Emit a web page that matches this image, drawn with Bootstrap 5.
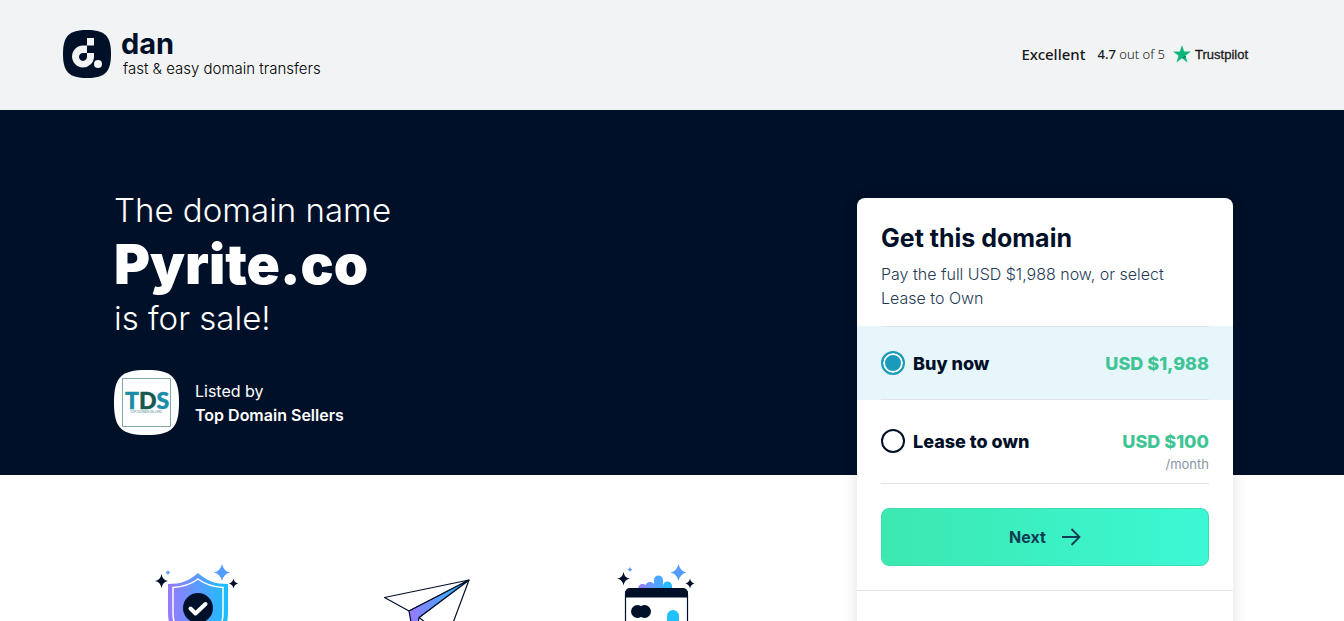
<!DOCTYPE html>
<html lang="en">
<head>
<meta charset="utf-8">
<meta name="viewport" content="width=device-width, initial-scale=1">
<title>Pyrite.co is for sale</title>
<link href="https://cdn.jsdelivr.net/npm/bootstrap@5.3.0/dist/css/bootstrap.min.css" rel="stylesheet">
<style>
  :root { --navy: #001029; --slate: #1f3b57; --mint: #3fc495; --teal: #1a9bbb; --rule: #dfe4e8; }
  body { font-family: Inter, "Liberation Sans", sans-serif; color: var(--navy); height: 100vh; overflow: hidden; }
  .site-header { background: #f1f3f5; padding: 30px 96px 30px 63px; }
  .brand { color: var(--navy); gap: 10px; }
  .brand-name { font-size: 29px; line-height: 28px; font-weight: 700; }
  .brand-tag { font-size: 15px; line-height: 22px; font-weight: 300; padding-left: 2px; color: #000; }
  .rating { font-family: "Noto Sans", sans-serif; font-size: 15px; line-height: 24px; color: #191919; padding-bottom: 2px; }
  .rating-score { font-size: 13px; }
  .rating-logo { font-family: "Liberation Sans", sans-serif; font-size: 13px; -webkit-text-stroke: .3px #191919; padding-top: 2px; }
  .page-width { max-width: 1144px; padding-left: 14px; padding-right: 11px; }
  .hero { background: var(--navy); padding: 80px 0 40px; }
  .hero-line { font-size: 33px; line-height: 40px; font-weight: 300; }
  .hero-title { font-size: 55px; line-height: 68px; font-weight: 900; }
  .seller { margin-top: 32px; gap: 16px; font-size: 16px; line-height: 24px; }
  .offer { width: 376px; min-height: 640px; margin-top: 8px; margin-bottom: -600px; z-index: 1; border: 0; border-radius: 8px; box-shadow: 0 2px 16px rgba(0, 15, 41, .12); }
  .offer-head { padding: 24px 24px 16px; }
  .offer-head h2 { font-size: 25px; line-height: 32px; font-weight: 700; }
  .offer-head p { font-size: 16px; line-height: 24px; font-weight: 300; color: var(--slate); }
  .choice { padding: 0 24px; cursor: pointer; }
  .choice-row { border-bottom: 1px solid var(--rule); font-size: 18px; line-height: 26px; font-weight: 800; padding: 24px 0 22px; gap: 8px; }
  .choice.is-first .choice-row { border-top: 1px solid var(--rule); }
  .choice:has(input:checked) { background: #e7f6fb; }
  .choice.is-second .choice-row { padding: 29px 0 10px; }
  .choice-price { color: var(--mint); }
  .choice-term { font-size: 13px; line-height: 18px; font-weight: 400; color: #8795a5; }
  .choice-radio { appearance: none; width: 24px; height: 24px; margin: 0; border: 2px solid var(--navy); border-radius: 50%; background: #fff; }
  .choice-radio:checked { border-color: var(--teal); background: var(--teal); box-shadow: inset 0 0 0 2px #fff; }
  .offer-action { padding: 24px; border-bottom: 1px solid var(--rule); }
  .btn-next { height: 58px; border: 1px solid #3fdcb2; border-radius: 8px; background: linear-gradient(90deg, #3be8b0, #3cf8d4); color: #123a56; font-size: 16px; font-weight: 700; gap: 15px; }
  .btn-next:hover { background: #3be8b0; color: #123a56; }
  .features { max-width: 626px; gap: 64px; padding-top: 88px; }
</style>
</head>
<body>
<header class="site-header d-flex justify-content-between align-items-center">
  <a href="#" class="brand d-flex text-decoration-none">
    <svg width="48" height="48" viewBox="0 0 48 48" aria-hidden="true">
      <path fill="#001029" d="M24 0C42 0 48 6 48 24S42 48 24 48 0 42 0 24 6 0 24 0Z"/>
      <path fill="#f1f3f5" fill-rule="evenodd" d="M24 8h7v7.500H24ZM20 15.500H24V23H20.500a4 4 0 1 0 3.500 4V23h7v4a11 11 0 1 1-11-11.500Z"/>
      <circle cx="35" cy="34" r="4" fill="#f1f3f5"/>
    </svg>
    <span class="d-flex flex-column">
      <span class="brand-name">dan</span>
      <span class="brand-tag">fast &amp; easy domain transfers</span>
    </span>
  </a>
  <div class="rating d-flex align-items-center">
    <span class="me-2 pe-1 fw-medium">Excellent</span>
    <span class="rating-score me-2"><span class="fw-medium">4.7</span> <span class="fw-light">out of 5</span></span>
    <svg width="18" height="18" viewBox="0 0 18 18" class="me-1" aria-hidden="true">
      <path fill="#0cb67a" d="M9 0l2.100 6.600H18l-5.600 4.100 2.200 6.700L9 13.300l-5.600 4.100 2.200-6.700L0 6.600h6.900Z"/>
      <path fill="#056b4a" d="M12.900 12.200l-.5-1.500L9 13.300Z"/>
    </svg>
    <span class="rating-logo">Trustpilot</span>
  </div>
</header>

<main>
  <section class="hero">
    <div class="container page-width d-flex justify-content-between align-items-start">
      <div class="text-white">
        <h1 class="m-0">
          <span class="hero-line d-block">The domain name</span>
          <span class="hero-title d-block">Pyrite.co</span>
          <span class="hero-line d-block">is for sale!</span>
        </h1>
        <div class="seller d-flex align-items-center">
          <svg width="65" height="65" viewBox="0 0 65 65" role="img" aria-label="Top Domain Sellers logo">
            <path fill="#fff" d="M32.500 0C58 0 65 7 65 32.500S58 65 32.500 65 0 58 0 32.500 7 0 32.500 0Z"/>
            <path fill="none" stroke="#7fa8a0" d="M8.500 8.500h48v48h-48Z"/>
            <text x="11" y="39" font-family="Lato, sans-serif" font-weight="900" font-size="23" fill="#1b8ca8" stroke="#1b8ca8" stroke-width=".5">T<tspan fill="#15594f" stroke="#15594f">D</tspan>S</text>
            <text x="16" y="43" font-family="Lato, sans-serif" font-size="3" fill="#4c8f98">TOP DOMAIN SELLERS</text>
          </svg>
          <div>
            <div>Listed by</div>
            <div class="fw-semibold">Top Domain Sellers</div>
          </div>
        </div>
      </div>

      <form class="offer card flex-shrink-0">
        <div class="offer-head">
          <h2 class="mb-2">Get this domain</h2>
          <p class="m-0">Pay the full USD $1,988 now, or select Lease to Own</p>
        </div>
        <label class="choice is-first" for="buy">
          <span class="choice-row d-flex">
            <input class="choice-radio" type="radio" name="plan" id="buy" checked>
            <span>Buy now</span>
            <span class="choice-price ms-auto">USD $1,988</span>
          </span>
        </label>
        <label class="choice is-second" for="lease">
          <span class="choice-row d-flex">
            <input class="choice-radio" type="radio" name="plan" id="lease">
            <span>Lease to own</span>
            <span class="ms-auto text-end">
              <span class="choice-price d-block">USD $100</span>
              <span class="choice-term d-block">/month</span>
            </span>
          </span>
        </label>
        <div class="offer-action">
          <button type="button" class="btn btn-next w-100 d-flex align-items-center justify-content-center">
            Next
            <svg width="20" height="20" viewBox="0 0 20 20" fill="none" stroke="currentColor" stroke-width="1.800" aria-hidden="true"><path d="M1 10h17M10.500 2l8 8-8 8"/></svg>
          </button>
        </div>
      </form>
    </div>
  </section>

  <section class="container page-width">
    <div class="features d-flex">
      <div class="flex-fill text-center">
        <svg width="88" height="100" viewBox="0 0 88 100" aria-hidden="true">
          <defs><linearGradient id="glow"><stop offset="0" stop-color="#9a78ff"/><stop offset="1" stop-color="#18c0ff"/></linearGradient></defs>
          <path fill="url(#glow)" d="M45 10C54 18 62 21 75 21V50C75 70 62 82 45 90 28 82 15 70 15 50V21C28 21 36 18 45 10Z"/>
          <path fill="none" stroke="#fff" stroke-width="1.500" d="M45 16C53 22 60 24 70 24.500V50C70 67 60 77 45 84 30 77 20 67 20 50V24.500C30 24 37 22 45 16Z"/>
          <circle cx="45" cy="45" r="15" fill="#001029"/>
          <path fill="none" stroke="#fff" stroke-width="4" stroke-linecap="round" stroke-linejoin="round" d="M37.500 45.500l5 5 10-9.500"/>
          <g fill="#001029"><path d="M8.500 11q1 6 6.500 7-5.500 1-6.500 7-1-6-6.500-7 5.500-1 6.500-7Z"/><path d="M80.500 15.500q.7 4 4.500 5-3.800 1-4.500 5-.7-4-4.500-5 3.800-1 4.500-5Z"/></g>
          <path fill="#529bff" d="M69 1q1.500 7 8 8.500-6.500 1.500-8 8.500-1.500-7-8-8.500 6.500-1.500 8-8.500ZM15 7q.5 2 2.500 2.500-2 .5-2.500 2.500-.5-2-2.500-2.500 2-.5 2.500-2.500Z"/>
        </svg>
      </div>
      <div class="flex-fill text-center">
        <svg width="88" height="100" viewBox="0 0 88 100" aria-hidden="true" stroke-linejoin="round">
          <defs><linearGradient id="wing"><stop offset="0" stop-color="#9a78ff"/><stop offset="1" stop-color="#18c0ff"/></linearGradient></defs>
          <path fill="#fff" stroke="#001029" stroke-width="1.200" d="M86 17L1.500 34.500 26 48ZM86 17L36 54.500 64 76Z"/>
          <path fill="url(#wing)" stroke="#001029" stroke-width="1.200" d="M86 17L26 48 32 82 36 54.500Z"/>
        </svg>
      </div>
      <div class="flex-fill text-center">
        <svg width="88" height="100" viewBox="0 0 88 100" aria-hidden="true">
          <path fill="#8f80ff" d="M25 26a4.500 5 0 0 1 9 0Z"/>
          <path fill="#6c95ff" d="M32 26v-2a5 5 0 0 1 10 0v2Z"/>
          <path fill="#4ba6ff" d="M41 26V17a4.500 4.500 0 0 1 9 0v9Z"/>
          <path fill="#27baff" d="M50 26v-3a4.500 4.500 0 0 1 9 0v3Z"/>
          <rect x="12.500" y="26" width="62" height="60" rx="5" fill="#fff" stroke="#001029" stroke-width="1.200"/>
          <path fill="#001029" d="M12 34.500V30a5 5 0 0 1 5-5H70a5 5 0 0 1 5 5V34.500Z"/>
          <g fill="#001029"><circle cx="24.500" cy="48.500" r="6.500"/><circle cx="31.500" cy="48.500" r="6.500"/>
          <path d="M10.500 9q1 6 6.500 6.500-5.500 1-6.500 7-1-6-6.500-7 5.500-.5 6.500-6.500ZM77 15.500q.7 4 4.500 5-3.800 1-4.500 5-.7-4-4.500-5 3.800-1 4.500-5Z"/></g>
          <path fill="#20c0ff" d="M54 64V53a6 6 0 0 1 12 0v11Z"/>
          <path fill="#529bff" d="M65.500 1q1.500 7 8 8.500-6.500 1.500-8 8.500-1.500-7-8-8.500 6.500-1.500 8-8.500ZM17 4q.5 2 2.500 2.500-2 .5-2.500 2.500-.5-2-2.500-2.500 2-.5 2.500-2.500Z"/>
        </svg>
      </div>
    </div>
  </section>
</main>
<script src="https://cdn.jsdelivr.net/npm/bootstrap@5.3.0/dist/js/bootstrap.bundle.min.js"></script>
</body>
</html>
